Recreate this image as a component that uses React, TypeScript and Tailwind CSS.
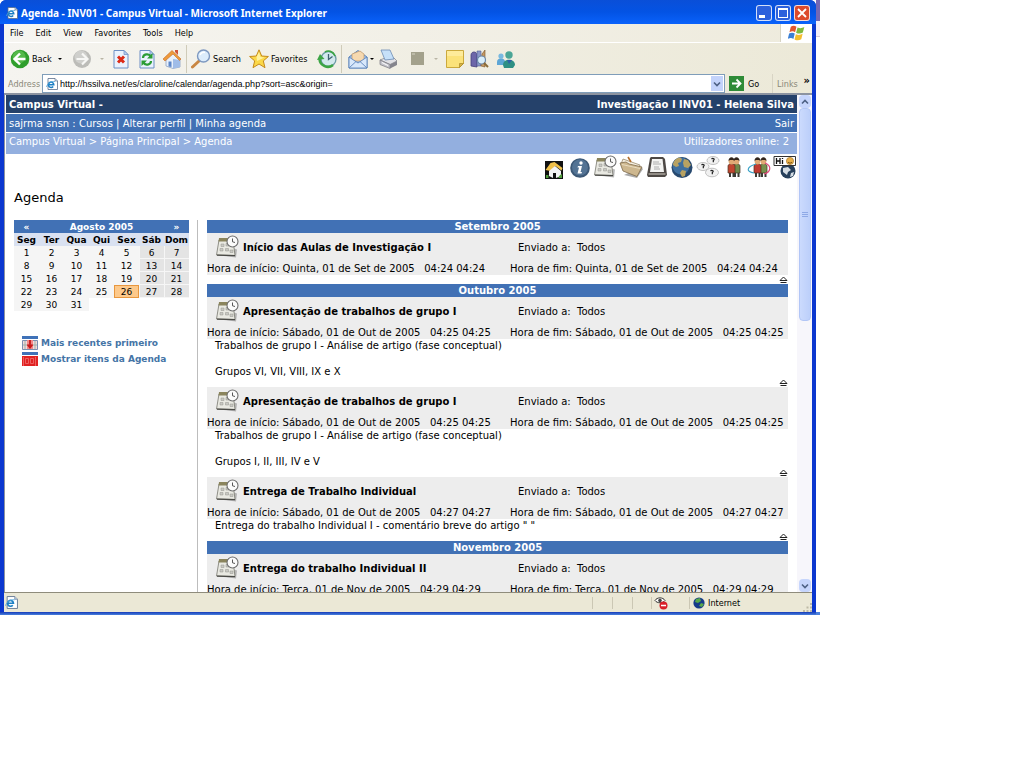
import type { ReactNode } from "react";

const MENUS = ["File", "Edit", "View", "Favorites", "Tools", "Help"];
const DAYS = ["Seg", "Ter", "Qua", "Qui", "Sex", "Sáb", "Dom"];
const WEEKS = [
  [1, 2, 3, 4, 5, 6, 7],
  [8, 9, 10, 11, 12, 13, 14],
  [15, 16, 17, 18, 19, 20, 21],
  [22, 23, 24, 25, 26, 27, 28],
  [29, 30, 31, 0, 0, 0, 0],
];

type Entry = { title: string; date: string; start: string; end: string; lines: string[] };
type Month = { name: string; entries: Entry[] };

const MONTHS: Month[] = [
  {
    name: "Setembro 2005",
    entries: [
      { title: "Início das Aulas de Investigação I", date: "Quinta, 01 de Set de 2005", start: "04:24 04:24", end: "04:24 04:24", lines: [] },
    ],
  },
  {
    name: "Outubro 2005",
    entries: [
      {
        title: "Apresentação de trabalhos de grupo I",
        date: "Sábado, 01 de Out de 2005",
        start: "04:25 04:25",
        end: "04:25 04:25",
        lines: ["Trabalhos de grupo I - Análise de artigo (fase conceptual)", "", "Grupos VI, VII, VIII, IX e X"],
      },
      {
        title: "Apresentação de trabalhos de grupo I",
        date: "Sábado, 01 de Out de 2005",
        start: "04:25 04:25",
        end: "04:25 04:25",
        lines: ["Trabalhos de grupo I - Análise de artigo (fase conceptual)", "", "Grupos I, II, III, IV e V"],
      },
      {
        title: "Entrega de Trabalho Individual",
        date: "Sábado, 01 de Out de 2005",
        start: "04:27 04:27",
        end: "04:27 04:27",
        lines: ['Entrega do trabalho Individual I - comentário breve do artigo " "'],
      },
    ],
  },
  {
    name: "Novembro 2005",
    entries: [
      { title: "Entrega do trabalho Individual II", date: "Terça, 01 de Nov de 2005", start: "04:29 04:29", end: "04:29 04:29", lines: [] },
    ],
  },
];

function Svg({ size = "size-5", box = "0 0 20 20", children }: { size?: string; box?: string; children: ReactNode }) {
  return (
    <svg className={`${size} block shrink-0`} viewBox={box} aria-hidden="true">
      {children}
    </svg>
  );
}

function IePage({ size = "size-3" }: { size?: string }) {
  return (
    <Svg size={size} box="0 0 12 12">
      <path d="M2 .5h7l2.500 2.500v8.500H2z" fill="#fff" stroke="#5a6f8c" strokeWidth=".8" />
      <path d="M9 .5v2.500h2.500" fill="#c9d6e8" stroke="#5a6f8c" strokeWidth=".6" />
      <path d="M2.300 6.700h5.500a2.700 2.700 0 1 0-.6 1.800" fill="none" stroke="#1d7fc4" strokeWidth="1.500" />
      <path d="M.5 9C1 6 5 3 9 3.500" fill="none" stroke="#4aa3dc" strokeWidth=".8" />
    </Svg>
  );
}

function CalendarClock() {
  return (
    <Svg size="size-6" box="0 0 24 24">
      <path d="M5 20.500l16 2 1-8-3-1z" fill="#8d8d8d" opacity=".6" />
      <path d="M4 5h14l2 15.500L1.500 20z" fill="#e9e9e2" stroke="#77776f" strokeWidth=".8" />
      <path d="M4 3h13v3.500H3.500z" fill="#8a845c" />
      <path d="M6 9h3v2.500H6zM11 8.500h3v2.500h-3zM5 13.500h3V16H5zM10.500 13.500h3V16h-3zM15 15h3v2.500h-3z" fill="#c9c9c4" stroke="#95958f" strokeWidth=".5" />
      <path d="M2 20.200l18 .4" stroke="#4a4a46" strokeWidth="1.300" />
      <circle cx="17.500" cy="6.500" r="5.500" fill="#fbfbfb" stroke="#6d6d6d" strokeWidth="1.100" />
      <path d="M17.500 3.500v3.300l2.500.7" fill="none" stroke="#444" strokeWidth=".9" />
    </Svg>
  );
}

function EarthIcon({ size = "size-6" }: { size?: string }) {
  return (
    <Svg size={size} box="0 0 24 24">
      <circle cx="12" cy="12.500" r="10.500" fill="#27496f" />
      <circle cx="11" cy="11" r="8.500" fill="#3f6f9f" />
      <path d="M5 5c3-3 6-2.500 7-1l-1 3-3 1 1 3-3 1-3-2c0-2 1-4 2-5zM14 4l4 1 3 5-3 3-4-1-1-4zM12 15l4 1-1 5-3 1-2-4z" fill="#b8a262" />
    </Svg>
  );
}

function Person({ x, c }: { x: number; c: string }) {
  return (
    <g transform={`translate(${x} 0)`}>
      <path d="M1 11c0-3 7-3 7 0v7H1z" fill={c} stroke="#4c3423" strokeWidth=".7" />
      <path d="M2 18h2v4H2zM5.500 18h2v4h-2z" fill="#3d3a35" />
      <circle cx="4.500" cy="6.500" r="2.900" fill="#e0aa74" />
      <path d="M1.500 6c0-5 6-5 6 0l-1.500-1H3z" fill="#33261d" />
    </g>
  );
}

const COURSE_TOOLS: { label: string; icon: ReactNode }[] = [
  {
    label: "Início",
    icon: (
      <Svg size="size-6" box="0 0 24 24">
        <path d="M3 6h18v18H3z" fill="#111" />
        <path d="M3.500 15l5-7 4-1 8 6-1 2.500-6-4.500-5 5z" fill="#f0c04a" />
        <path d="M7 16l6-5 6 5v5l-5 2v-5h-3v5l-4-2z" fill="#f4f4f4" />
        <path d="M4 20h2.500v3H4zM18 20l2-1v4h-4z" fill="#4e9a3b" />
      </Svg>
    ),
  },
  {
    label: "Informação",
    icon: (
      <Svg size="size-6" box="0 0 24 24">
        <circle cx="12" cy="13" r="9.800" fill="#3c5876" />
        <circle cx="12" cy="12.500" r="8" fill="#537394" />
        <circle cx="13" cy="8" r="1.700" fill="#fff" />
        <path d="M10 11h4l-1.500 6h1.500l-.5 1.500h-4l1.500-6H9.500z" fill="#fff" />
      </Svg>
    ),
  },
  { label: "Agenda", icon: <CalendarClock /> },
  {
    label: "Documentos",
    icon: (
      <Svg size="size-6" box="0 0 24 24">
        <path d="M5 20l13 3 6-9-2-2z" fill="#555" opacity=".5" />
        <path d="M4 4l17 6-1 3L2 9z" fill="#f6f0e2" stroke="#8d7a58" strokeWidth=".7" />
        <path d="M1 8l6-1 3 2 13 3-5 9.500L4 16z" fill="#cdb78f" stroke="#7e6a4a" strokeWidth=".8" />
        <path d="M3 9.500l18 4" stroke="#e9dcc0" strokeWidth="1" />
        <path d="M9 2l3 5" stroke="#b36e2c" strokeWidth="1.600" />
      </Svg>
    ),
  },
  {
    label: "Anúncios",
    icon: (
      <Svg size="size-6" box="0 0 24 24">
        <path d="M6 2h12l2 2 2 16-2 2H3l-1-2L5 3z" fill="#4d4844" />
        <path d="M7 4h10.500l1.500 13H5z" fill="#f4f4f2" />
        <path d="M8 7h6M8 9h8M9 12h5M9 14h6" stroke="#9c9c9c" strokeWidth=".8" />
        <path d="M3.500 19h17" stroke="#aaa59d" strokeWidth="1.500" />
      </Svg>
    ),
  },
  { label: "Ligações", icon: <EarthIcon /> },
  {
    label: "Fóruns",
    icon: (
      <Svg size="size-6" box="0 0 24 24">
        <g fill="#f1f1f1" stroke="#b3b3b3" strokeWidth=".8">
          <ellipse cx="17" cy="5.500" rx="6" ry="4" />
          <ellipse cx="7" cy="11.500" rx="6" ry="4" />
          <ellipse cx="16" cy="17.500" rx="6.500" ry="4.300" />
        </g>
        <g fill="none" stroke="#222" strokeWidth="1.200">
          <path d="M15.500 4c1.500-1.500 4 0 1.800 1.500v1.800M5.500 10c1.500-1.500 4 0 1.800 1.500v1.800M14.500 16c1.500-1.500 4 0 1.800 1.500v1.800" />
        </g>
      </Svg>
    ),
  },
  {
    label: "Utilizadores",
    icon: (
      <Svg size="size-6" box="0 0 24 24">
        <Person x={10} c="#6f8a4a" />
        <Person x={5} c="#c0452f" />
      </Svg>
    ),
  },
  {
    label: "Grupos",
    icon: (
      <Svg size="size-6" box="0 0 24 24">
        <Person x={12} c="#77914e" />
        <Person x={6} c="#c23a30" />
        <path d="M9 9c-10 3-10 8-2 9" fill="none" stroke="#3aa3c8" strokeWidth="1.200" />
        <path d="M18 8c7 3 6 9-1 11" fill="none" stroke="#e0487c" strokeWidth="1.200" />
      </Svg>
    ),
  },
  {
    label: "Chat",
    icon: (
      <Svg size="size-6" box="0 0 24 24">
        <circle cx="15" cy="16" r="7.500" fill="#27405c" />
        <path d="M10 13l5-1 3 3-3 2-1 3-4-3zM18 18l3-1-1 4-3 1z" fill="#d6dde4" />
        <path d="M1 1.500h21.500v9H1z" fill="#fff" stroke="#333" />
        <path d="M3.500 3v6M7 3v6M3.500 6H7M9.500 5v4M9.500 3v1" stroke="#111" strokeWidth="1.300" />
        <circle cx="17" cy="6" r="3.600" fill="#e8b04a" stroke="#9a6a1c" strokeWidth=".6" />
        <path d="M15 7c1 1.500 3 1.500 4 0" fill="none" stroke="#5a3a0c" strokeWidth=".8" />
      </Svg>
    ),
  },
];

function Caret({ pale }: { pale?: boolean }) {
  return (
    <Svg size="size-1" box="0 0 4 4">
      <path d="M0 1h4L2 3z" fill={pale ? "#b9b5a6" : "#000"} />
    </Svg>
  );
}

function PageIcon({ children }: { children: ReactNode }) {
  return (
    <Svg>
      <path d="M3 1.500h10l4 4V19H3z" fill="#eaf2fd" stroke="#6c8fc4" />
      <path d="M13 1.500v4h4z" fill="#b7cdf0" stroke="#6c8fc4" strokeWidth=".7" />
      {children}
    </Svg>
  );
}

function Tool({ label, children, className = "" }: { label: string; children: ReactNode; className?: string }) {
  return (
    <button type="button" aria-label={label} className={`flex shrink-0 items-center gap-0.5 ${className}`}>
      {children}
    </button>
  );
}

function Toolbar() {
  return (
    <div className="flex h-8 shrink-0 items-center border-t border-white bg-linear-to-r from-[#f5f4f0] to-[#ece9d8] pl-1.5">
      <Tool label="Back" className="w-[62px]">
        <Svg>
          <circle cx="10" cy="10" r="9.300" fill="#2f9e2c" />
          <circle cx="9" cy="8" r="6.500" fill="#62c456" opacity=".7" />
          <path d="M10 4.500L4.500 10l5.500 5.500M5 10h10.500" fill="none" stroke="#fff" strokeWidth="2.400" />
        </Svg>
        <span className="w-6 text-left">Back</span>
        <Caret />
      </Tool>
      <Tool label="Forward" className="w-[39px] gap-2">
        <Svg>
          <circle cx="10" cy="10" r="9" fill="#bcbcb8" />
          <circle cx="9" cy="8" r="6.500" fill="#cfcfcc" />
          <path d="M10 4.500l5.500 5.500-5.500 5.500M15 10H4.500" fill="none" stroke="#f7f7f5" strokeWidth="2.200" />
        </Svg>
        <Caret pale />
      </Tool>
      <Tool label="Stop" className="w-[26px]">
        <PageIcon>
          <path d="M7 7.500l6 6M13 7.500l-6 6" stroke="#dc2a16" strokeWidth="3" />
        </PageIcon>
      </Tool>
      <Tool label="Refresh" className="w-[25px]">
        <PageIcon>
          <path d="M6 9c0-4 6-5 7.500-1.500M14 12c0 4-6 5-7.500 1.500" fill="none" stroke="#2b9c35" strokeWidth="2.200" />
          <path d="M15.500 4v5.500H10zM4.500 17v-5.500H10z" fill="#2b9c35" />
        </PageIcon>
      </Tool>
      <Tool label="Home" className="w-6">
        <Svg>
          <path d="M4 9l7-6 7 7v8l-7 1.500L4 17z" fill="#e8f0fb" stroke="#8ba1c4" strokeWidth=".8" />
          <path d="M11 10l7 1v7l-7 1.500z" fill="#9fbce8" />
          <path d="M1 10l9-8.500L19 10l-1.500 1.500L11 5l-8 7z" fill="#ee9a3a" stroke="#c46a28" strokeWidth=".6" />
          <path d="M13 1h3v5l-3-3z" fill="#d0543a" />
          <path d="M6.500 12.500h3V18l-3-.5z" fill="#5c86c8" />
        </Svg>
      </Tool>
      <span className="mr-1 h-7 w-px bg-[#cfcbb9]" />
      <Tool label="Search" className="w-[58px]">
        <Svg>
          <path d="M8 12l-6.500 6" stroke="#c98642" strokeWidth="3" strokeLinecap="round" />
          <circle cx="12.500" cy="7" r="6" fill="#dcecfb" stroke="#7d98c0" strokeWidth="1.400" />
          <path d="M9 6c1-2 3-3 5-2.500" fill="none" stroke="#fff" strokeWidth="1.500" />
        </Svg>
        Search
      </Tool>
      <Tool label="Favorites" className="w-[68px]">
        <Svg>
          <path d="M10 .8l2.700 6.200 6.700.5-5.100 4.400 1.700 6.800L10 15l-6 3.700 1.700-6.800L.6 7.500 7.300 7z" fill="#fbd848" stroke="#c58a1b" strokeWidth="1" />
          <path d="M10 3l1.500 5 4 .5L8 12 7.500 8z" fill="#fff2a0" />
        </Svg>
        Favorites
      </Tool>
      <Tool label="History" className="w-6">
        <Svg>
          <circle cx="11.500" cy="10" r="7.500" fill="#d3e9ee" stroke="#6b9aa5" strokeWidth="1.300" />
          <path d="M11.500 5v5.500l4-3" fill="none" stroke="#3d6270" strokeWidth="1.300" />
          <path d="M16 16C11 20 3 17 2.500 10" fill="none" stroke="#3da545" strokeWidth="2.600" />
          <path d="M0 11l3-6 4.500 5z" fill="#3da545" />
          <path d="M8 3c3-2 8-1 10 4" fill="none" stroke="#3da545" strokeWidth="1.600" />
        </Svg>
      </Tool>
      <span className="mr-1.5 h-7 w-px bg-[#cfcbb9]" />
      <Tool label="Mail" className="w-[30px]">
        <Svg>
          <path d="M1 8l9-6.500L19 8v11H1z" fill="#9fc2ee" stroke="#5f86bc" />
          <path d="M4 5l8-3 4 3v7H4z" fill="#f6d9b0" stroke="#c39a68" strokeWidth=".7" />
          <path d="M1 8l9 6 9-6v11H1z" fill="#d8e8fb" stroke="#5f86bc" strokeWidth=".9" />
          <path d="M1 19l7-6.500M19 19l-7-6.500" stroke="#5f86bc" strokeWidth=".9" />
        </Svg>
        <Caret />
      </Tool>
      <Tool label="Print" className="w-8">
        <Svg>
          <path d="M2 11l5-2h9l3 3-7 3.500z" fill="#e2e2e6" stroke="#8b8b90" strokeWidth=".8" />
          <path d="M3 1l9 0 4 9-9 1z" fill="#c6e0f9" stroke="#6c8cb4" strokeWidth=".8" />
          <path d="M2 11l10 4.500v4L2 15.500z" fill="#c4c4cb" stroke="#77777e" strokeWidth=".7" />
          <path d="M12 15.500l7-3.500v4l-7 3.500z" fill="#85858d" />
          <path d="M4 13.500l6 3" stroke="#fff" />
        </Svg>
      </Tool>
      <Tool label="Edit" className="w-[35px] gap-2.5">
        <Svg size="size-[13px] ml-px" box="0 0 13 13">
          <path d="M0 0h13v13H0z" fill="#a3a18c" />
          <path d="M1 2h3" stroke="#d6d4c4" />
        </Svg>
        <Caret pale />
      </Tool>
      <Tool label="Notes" className="w-[25px]">
        <Svg>
          <path d="M1.500 1.500h17v13l-4 4h-13z" fill="#fbe27a" stroke="#cba93c" />
          <path d="M2 2h16v5H2z" fill="#fff0a8" opacity=".7" />
          <path d="M18.500 14.500l-4 4v-4z" fill="#d7b347" stroke="#a98825" strokeWidth=".7" />
        </Svg>
      </Tool>
      <Tool label="Research" className="w-[26px]">
        <Svg>
          <path d="M1 6c0-4 6-4 6 0v12l-6-1z" fill="#6d66a9" stroke="#443f7c" strokeWidth=".8" />
          <path d="M7 2h4v15H7z" fill="#8c98c9" stroke="#535e93" strokeWidth=".6" />
          <path d="M12 5l3-4v17l-4-1z" fill="#c69861" stroke="#765228" strokeWidth=".6" />
          <circle cx="11.500" cy="11" r="4" fill="#d9eefb" stroke="#6a87a8" strokeWidth="1.200" />
          <path d="M14 14l4 4" stroke="#8a6b38" strokeWidth="2" />
        </Svg>
      </Tool>
      <Tool label="Messenger">
        <Svg>
          <path d="M1 13c0-5 8-5 8 0v3H1z" fill="#5ea6d6" />
          <circle cx="5" cy="7" r="2.600" fill="#78b9e0" />
          <path d="M7 16c0-7 12-7 12 0l-2 3H8z" fill="#2e8f84" />
          <circle cx="13" cy="6" r="3.700" fill="#4aa596" />
          <path d="M11 11l2 4 3-4z" fill="#2f5fa8" />
        </Svg>
      </Tool>
    </div>
  );
}

function TitleBar() {
  const base = "flex size-4 items-center justify-center rounded-[3px] border border-white/80";
  return (
    <header className="flex h-6 shrink-0 items-center gap-[3px] rounded-t-md bg-linear-to-b from-[#0a4fd8] via-[#0353e4] to-[#0a62fb] pt-0.5 pr-1.5 pl-1.5 text-white">
      <IePage />
      <h1 className="grow truncate font-['Noto_Sans',sans-serif] text-[10px] leading-4 font-bold">
        Agenda - INV01 - Campus Virtual - Microsoft Internet Explorer
      </h1>
      <div className="flex gap-[3px]">
        <button type="button" aria-label="Minimize" className={`${base} bg-[#2c60dc]`}>
          <span className="mt-1.5 mr-1 h-[3px] w-1.5 bg-white" />
        </button>
        <button type="button" aria-label="Maximize" className={`${base} bg-[#2c60dc]`}>
          <span className="size-2.5 border border-t-2 border-white" />
        </button>
        <button type="button" aria-label="Close" className={`${base} bg-[#dc4a2c]`}>
          <Svg size="size-2.5" box="0 0 10 10">
            <path d="M1 1l8 8M9 1L1 9" stroke="#fff" strokeWidth="1.800" />
          </Svg>
        </button>
      </div>
    </header>
  );
}

function MenuBar() {
  return (
    <div className="flex h-[18px] shrink-0 justify-between bg-linear-to-r from-[#f6f5f1] to-[#eeebdd] pl-1.5">
      <nav className="flex items-center gap-3">
        {MENUS.map((m) => (
          <button type="button" key={m}>
            {m}
          </button>
        ))}
      </nav>
      <div className="flex w-8 items-center justify-center border-l border-[#d8d4c4] bg-white">
        <Svg size="size-[18px]" box="0 0 16 16">
          <path d="M2.500 2.500c2-1.500 3.500-1 5 0L6.300 7.300c-1.500-1-3-1-5 0z" fill="#e4572e" />
          <path d="M8.500 3c2 1 3.500 1 6-.3L13.200 7.500c-2 1.300-4 1.200-6 .2z" fill="#7fba3c" />
          <path d="M1 8.500c2-1.200 3.500-1 5 0l-1.200 4.800c-1.500-1-3-1-5 0z" fill="#3b7fd4" />
          <path d="M7 9c2 1 3.800 1 6-.3l-1.200 4.800c-2 1.300-4 1.200-6 .2z" fill="#f3bd2e" />
        </Svg>
      </div>
    </div>
  );
}

function AddressBar() {
  return (
    <form className="flex h-[19px] shrink-0 items-stretch bg-linear-to-r from-[#f5f4f0] to-[#ece9d8] pl-1" onSubmit={(e) => e.preventDefault()}>
      <label htmlFor="address" className="w-[34px] self-center text-[#8a8878]">
        Address
      </label>
      <div className="flex min-w-0 grow items-center gap-0.5 border border-[#7f9db9] bg-white pl-[3px]">
        <IePage />
        <input
          id="address"
          type="text"
          className="min-w-0 grow bg-transparent font-['Liberation_Sans',sans-serif] outline-none"
          defaultValue="http://hssilva.net/es/claroline/calendar/agenda.php?sort=asc&origin="
        />
        <button type="button" aria-label="Address list" className="m-px flex h-[15px] w-3 items-center justify-center bg-[#c3d3fb]">
          <Svg size="size-2" box="0 0 8 8">
            <path d="M1 2.500l3 3 3-3" fill="none" stroke="#4d6185" strokeWidth="1.600" />
          </Svg>
        </button>
      </div>
      <button type="submit" className="ml-1 flex w-[43px] items-center gap-1">
        <Svg size="size-[15px]" box="0 0 15 15">
          <path d="M0 0h15v15H0z" fill="#2e8b37" />
          <path d="M3 7.500h8M7.500 3.500l4 4-4 4" fill="none" stroke="#fff" strokeWidth="1.800" />
        </Svg>
        Go
      </button>
      <div className="flex w-10 items-center justify-between border-l border-[#d8d4c4] pr-0.5 pl-1">
        <span className="text-[#8a8878]">Links</span>
        <button type="button" aria-label="More links" className="pb-1.5 text-[11px] font-bold">
          »
        </button>
      </div>
    </form>
  );
}

function Calendar() {
  return (
    <table className="w-full table-fixed border-separate border-spacing-0 text-center text-[9px] leading-3">
      <thead>
        <tr className="h-[13px] bg-[#4171b5] text-white">
          <th>
            <a href="#prev">«</a>
          </th>
          <th colSpan={5}>Agosto 2005</th>
          <th>
            <a href="#next">»</a>
          </th>
        </tr>
        <tr className="h-[13px] bg-[#d9e1f1]">
          {DAYS.map((d) => (
            <th key={d} scope="col">
              {d}
            </th>
          ))}
        </tr>
      </thead>
      <tbody>
        {WEEKS.map((week) => (
          <tr key={week[0]} className="h-[13px]">
            {week.map((n, i) => (
              <td
                key={i}
                className={
                  n === 26
                    ? "bg-[#fdc98b] shadow-[inset_0_0_0_1px_#e8973f]"
                    : n === 0
                      ? ""
                      : i > 4
                        ? "bg-[#e4e4e4] shadow-[inset_1px_-1px_0_#f6f6f6]"
                        : "bg-[#f5f5f5]"
                }
              >
                {n || ""}
              </td>
            ))}
          </tr>
        ))}
      </tbody>
    </table>
  );
}

function SideLink({ href, mark, children }: { href: string; mark: ReactNode; children: ReactNode }) {
  return (
    <a href={href} className="flex h-4 items-center gap-[3px] text-[9px] font-bold whitespace-nowrap text-[#4474a6]">
      <Svg size="size-4" box="0 0 16 16">
        <path d="M0 1h16v3H0z" fill="#3f72b8" />
        {mark}
      </Svg>
      {children}
    </a>
  );
}

function AgendaEntry({ entry }: { entry: Entry }) {
  return (
    <article>
      <div className="grid h-[42px] grid-cols-[303px_1fr] grid-rows-[28px_14px] items-center bg-[#ededed] whitespace-nowrap">
        <h3 className="flex items-center gap-1 pl-2 font-bold">
          <CalendarClock />
          {entry.title}
        </h3>
        <span className="pl-2">Enviado a: &nbsp;Todos</span>
        <span>
          Hora de início: {entry.date} &nbsp; {entry.start}
        </span>
        <span>
          Hora de fim: {entry.date} &nbsp; {entry.end}
        </span>
      </div>
      <div className="pl-2">
        {entry.lines.map((line, i) => (
          <p key={i} className="h-[13px]">
            {line}
          </p>
        ))}
      </div>
      <div className="flex h-[9px] items-end justify-end">
        <a href="#top" aria-label="Topo">
          <Svg size="h-2 w-[9px]" box="0 0 9 8">
            <path d="M4.500 1l3.500 3.500H1zM1.500 6.500h6" fill="#fff" stroke="#222" strokeWidth="1" />
          </Svg>
        </a>
      </div>
    </article>
  );
}

function CoursePage() {
  return (
    <main id="top" className="min-w-0 grow overflow-hidden bg-white pl-px text-[10px] leading-[13px] text-black">
      <div className="space-y-px text-white">
        <div className="flex h-[18px] items-center justify-between bg-[#25416a] px-[3px] font-bold">
          <a href="#home">Campus Virtual -</a>
          <a href="#course">Investigação I INV01 - Helena Silva</a>
        </div>
        <div className="flex h-[18px] items-center justify-between bg-[#4171b5] px-[3px]">
          <nav>
            sajrma snsn : <a href="#courses">Cursos</a> | <a href="#profile">Alterar perfil</a> | <a href="#agenda">Minha agenda</a>
          </nav>
          <a href="#logout">Sair</a>
        </div>
        <div className="flex h-[21px] justify-between bg-[#93afdf] pt-0.5 pr-2 pl-[3px]">
          <nav>
            <a href="#home">Campus Virtual</a> &gt; <a href="#main">Página Principal</a> &gt; <a href="#agenda">Agenda</a>
          </nav>
          <span>Utilizadores online: 2</span>
        </div>
      </div>
      <nav className="ml-auto flex h-[26px] w-[255px] items-center justify-between">
        {COURSE_TOOLS.map((t) => (
          <a key={t.label} href="#tool" aria-label={t.label}>
            {t.icon}
          </a>
        ))}
      </nav>
      <h2 className="mt-2.5 pl-2 text-[13px] leading-4">Agenda</h2>
      <div className="mt-3.5 flex pr-[9px] pl-2">
        <aside className="w-[175px] shrink-0">
          <Calendar />
          <div className="mt-6 pl-2">
            <SideLink
              href="#recent"
              mark={
                <>
                  <path d="M.5 5.500h15v9H.5z" fill="#f3dada" stroke="#7b8fb0" />
                  <path d="M3 6v8M13 6v8M1 10h14" stroke="#9db0a8" />
                  <path d="M5 5h6v9H5z" fill="#f08a8a" />
                  <path d="M8 5v7M5.500 9.500L8 12.500l2.500-3" fill="none" stroke="#c81a1a" strokeWidth="1.800" />
                </>
              }
            >
              Mais recentes primeiro
            </SideLink>
            <SideLink
              href="#show"
              mark={
                <>
                  <path d="M0 5h16v10H0z" fill="#e02222" />
                  <path d="M3.500 7.500h3v5h-3zM8.500 7.500h3v5h-3zM13.500 6v9M1.500 6v9" fill="none" stroke="#f07070" strokeWidth=".8" />
                </>
              }
            >
              Mostrar itens da Agenda
            </SideLink>
          </div>
        </aside>
        <div className="ml-2 min-w-0 grow border-l border-[#bdbdbd] pb-2 pl-[9px]">
          {MONTHS.map((month) => (
            <section key={month.name}>
              <h3 className="h-[13px] bg-[#4171b5] text-center font-bold text-white">{month.name}</h3>
              {month.entries.map((entry, i) => (
                <AgendaEntry key={i} entry={entry} />
              ))}
            </section>
          ))}
        </div>
      </div>
    </main>
  );
}

function ScrollBar() {
  const btn = "flex h-[13px] shrink-0 items-center justify-center rounded-sm bg-[#c6d5fc]";
  return (
    <div className="flex w-[15px] shrink-0 flex-col bg-[#f7f6fb] pr-px pl-0.5">
      <button type="button" aria-label="Scroll up" className={btn}>
        <Svg size="size-2" box="0 0 8 8">
          <path d="M1 5.500l3-3 3 3" fill="none" stroke="#4d6185" strokeWidth="1.600" />
        </Svg>
      </button>
      <div className="flex grow flex-col">
        <div className="flex basis-[213px] flex-col items-center justify-center gap-px rounded-sm border border-[#b2c6f6] bg-linear-to-r from-[#cbdafd] to-[#bccffa]">
          <span className="h-px w-1.5 bg-[#8ea9e6]" />
          <span className="h-px w-1.5 bg-[#8ea9e6]" />
          <span className="h-px w-1.5 bg-[#8ea9e6]" />
        </div>
      </div>
      <button type="button" aria-label="Scroll down" className={btn}>
        <Svg size="size-2" box="0 0 8 8">
          <path d="M1 2.500l3 3 3-3" fill="none" stroke="#4d6185" strokeWidth="1.600" />
        </Svg>
      </button>
    </div>
  );
}

function StatusBar() {
  return (
    <footer className="flex h-5 shrink-0 items-center border-t border-[#8f8c7c] bg-[#ebe8d6] pl-px">
      <IePage size="size-[13px]" />
      <span className="grow" />
      <span className="h-3 w-5 border-l border-[#cbc7b4]" />
      <span className="h-3 w-5 border-l border-[#cbc7b4]" />
      <span className="h-3 w-[19px] border-l border-[#cbc7b4]" />
      <span className="flex h-3 w-[38px] items-center border-l border-[#cbc7b4] pl-0.5">
        <Svg size="size-3.5" box="0 0 14 14">
          <path d="M1 4.500C3 1 9 1 11 4.500 9 7.500 3 7.500 1 4.500z" fill="#fff" stroke="#333" />
          <circle cx="6" cy="4.500" r="1.800" fill="#444" />
          <circle cx="9.500" cy="9.500" r="4" fill="#d9202a" />
          <path d="M7 9.500h5" stroke="#fff" strokeWidth="1.500" />
        </Svg>
      </span>
      <span className="flex h-3 w-[110px] items-center gap-[3px] border-l border-[#cbc7b4] pl-[3px]">
        <Svg size="size-3" box="0 0 12 12">
          <circle cx="6" cy="6" r="5.600" fill="#153a8a" />
          <path d="M3 2l4-1 1 3-3 2-3-1zM8 6l3 1-2 3-3-1z" fill="#57a84a" />
        </Svg>
        Internet
      </span>
      <span className="flex h-full w-[13px] items-end justify-end">
        <Svg size="size-2.5" box="0 0 10 10">
          <path d="M8 1h2v2H8zM8 4.500h2v2H8zM4.500 4.500h2v2h-2zM8 8h2v2H8zM4.500 8h2v2h-2zM1 8h2v2H1z" fill="#bdb9a5" />
        </Svg>
      </span>
    </footer>
  );
}

export default function App() {
  return (
    <div className="h-screen overflow-hidden bg-white">
      <div className="flex h-full max-h-[615px] w-full max-w-[820px]">
        <div className="flex min-w-0 grow flex-col rounded-t-md bg-[#0b37cf] font-['DejaVu_Sans','Noto_Sans',sans-serif]">
          <div className="flex min-h-0 grow flex-col font-['DejaVu_Sans_Condensed','DejaVu_Sans',sans-serif] text-[9px] leading-3 text-black">
            <TitleBar />
            <div className="mx-1 flex min-h-0 grow flex-col">
              <MenuBar />
              <Toolbar />
              <AddressBar />
              <div className="flex min-h-0 grow border-t-2 border-l border-[#8c93a0] font-['DejaVu_Sans','Noto_Sans',sans-serif]">
                <CoursePage />
                <ScrollBar />
              </div>
              <StatusBar />
            </div>
          </div>
          <div className="h-[3px] shrink-0 bg-linear-to-b from-[#1838b8] to-[#4a80dc]" />
        </div>
        <div className="flex w-1 shrink-0 flex-col">
          <span className="h-[21px] bg-[#7468b4]" />
          <span className="h-4 border-b border-[#d8c8d8] bg-[#f4eef8]" />
          <span className="grow" />
          <span className="h-[3px] bg-[#4a80dc]" />
        </div>
      </div>
    </div>
  );
}
